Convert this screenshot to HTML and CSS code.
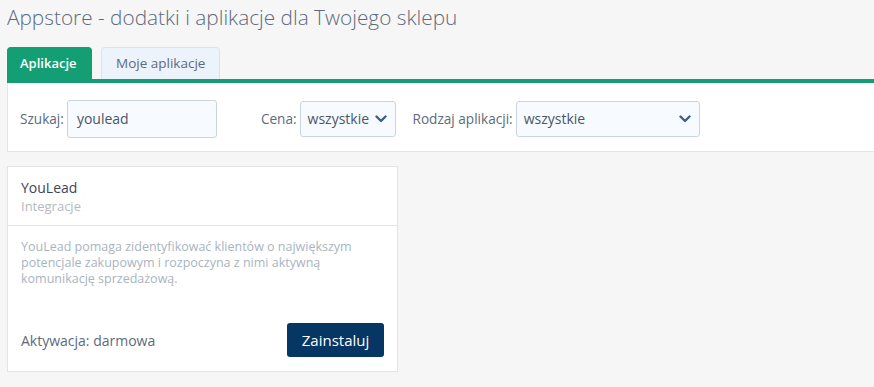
FILE: index.html
```html
<!DOCTYPE html>
<html lang="pl">
<head>
<meta charset="utf-8">
<title>Appstore</title>
<link rel="stylesheet" href="styles.css">
</head>
<body>
<div class="page">
  <h1 class="title">Appstore - dodatki i aplikacje dla Twojego sklepu</h1>
  <div class="tabs">
    <a class="tab tab-active">Aplikacje</a>
    <a class="tab">Moje aplikacje</a>
  </div>
  <div class="filters">
    <label class="field field-search">
      <span class="field-label">Szukaj:</span>
      <span class="input">youlead</span>
    </label>
    <label class="field field-price">
      <span class="field-label">Cena:</span>
      <span class="select select-price">wszystkie
        <svg class="chev" viewBox="0 0 12 8" width="12" height="8"><path d="M1.5 1.5 L6 6 L10.5 1.5" fill="none" stroke="#3f5f86" stroke-width="2.4" stroke-linecap="round" stroke-linejoin="round"/></svg>
      </span>
    </label>
    <label class="field field-type">
      <span class="field-label">Rodzaj aplikacji:</span>
      <span class="select select-type">wszystkie
        <svg class="chev" viewBox="0 0 12 8" width="12" height="8"><path d="M1.5 1.5 L6 6 L10.5 1.5" fill="none" stroke="#3f5f86" stroke-width="2.4" stroke-linecap="round" stroke-linejoin="round"/></svg>
      </span>
    </label>
  </div>
  <div class="card">
    <div class="card-head">
      <div class="card-name">YouLead</div>
      <div class="card-cat">Integracje</div>
    </div>
    <div class="card-body">
      <p class="card-desc">YouLead pomaga zidentyfikować klientów o największym potencjale zakupowym i rozpoczyna z nimi aktywną komunikację sprzedażową.</p>
      <div class="card-foot">
        <span class="card-price">Aktywacja: darmowa</span>
        <button class="btn">Zainstaluj</button>
      </div>
    </div>
  </div>
</div>
</body>
</html>
```
FILE: styles.css
```css
* { box-sizing: border-box; }
html, body {
  margin: 0;
  padding: 0;
  background: #f6f6f6;
  font-family: "Open Sans", "Noto Sans", sans-serif;
  color: #5d6a7c;
}
.page {
  padding: 0 0 0 7px;
  overflow: hidden;
}
.title {
  margin: 0;
  padding-top: 3px;
  font-size: 20.8px;
  font-weight: 300;
  line-height: 28px;
  color: #5d6a7c;
  height: 47px;
}
.tabs {
  display: flex;
  gap: 9px;
  border-bottom: 4px solid #139e74;
  height: 36px;
  align-items: flex-end;
}
.tab {
  display: block;
  height: 32px;
  line-height: 31px;
  padding: 0 14px;
  font-size: 13.5px;
  border-radius: 4px 4px 0 0;
  color: #5d6a7c;
  background: #edf3fb;
  border: 1px solid #dfe3e8;
  border-bottom: none;
}
.tab-active {
  background: #139e74;
  border-color: #139e74;
  color: #ffffff;
  font-weight: 600;
  font-size: 13px;
  padding: 0 12px;
  width: 85px;
}
.filters {
  display: flex;
  align-items: center;
  height: 69px;
  background: #fff;
  border: 1px solid #e4e4e4;
  border-top: none;
  border-right: none;
  padding-left: 12px;
  padding-top: 3px;
}
.field {
  display: flex;
  align-items: center;
  gap: 3px;
  font-size: 13.6px;
}
.field-label { color: #5d6a7c; }
.field-price { margin-left: 44px; }
.field-type { margin-left: 17px; }
.input, .select {
  display: flex;
  align-items: center;
  background: #f7fbff;
  border: 1px solid #c9d4df;
  border-radius: 3px;
  color: #4a5567;
  font-size: 14px;
}
.input {
  width: 150px;
  height: 38px;
  padding-left: 9px;
}
.select {
  height: 36px;
  padding: 0 8px 0 7px;
  justify-content: space-between;
}
.select-price { width: 96px; }
.select-type { width: 184px; }
.chev { display: block; }
.card {
  margin-top: 14px;
  width: 391px;
  height: 206px;
  background: #fff;
  border: 1px solid #e3e3e3;
  display: flex;
  flex-direction: column;
}
.card-head {
  height: 59px;
  padding: 11px 13px 0;
  border-bottom: 1px solid #e3e3e3;
}
.card-name {
  font-size: 14px;
  line-height: 19px;
  color: #3e4656;
}
.card-cat {
  font-size: 13px;
  line-height: 18px;
  color: #b2bac4;
}
.card-body {
  flex: 1;
  display: flex;
  flex-direction: column;
  padding: 13px 13px 14px;
}
.card-desc {
  margin: 0;
  font-size: 12.5px;
  line-height: 16px;
  color: #a9b4c1;
  flex: 1;
}
.card-foot {
  display: flex;
  align-items: center;
  justify-content: space-between;
}
.card-price {
  font-size: 14px;
  color: #5d6a7c;
}
.btn {
  width: 97px;
  height: 34px;
  border: none;
  border-radius: 3px;
  background: #063663;
  color: #fff;
  font-family: inherit;
  font-size: 15px;
  font-weight: 500;
  padding: 0;
}
```
